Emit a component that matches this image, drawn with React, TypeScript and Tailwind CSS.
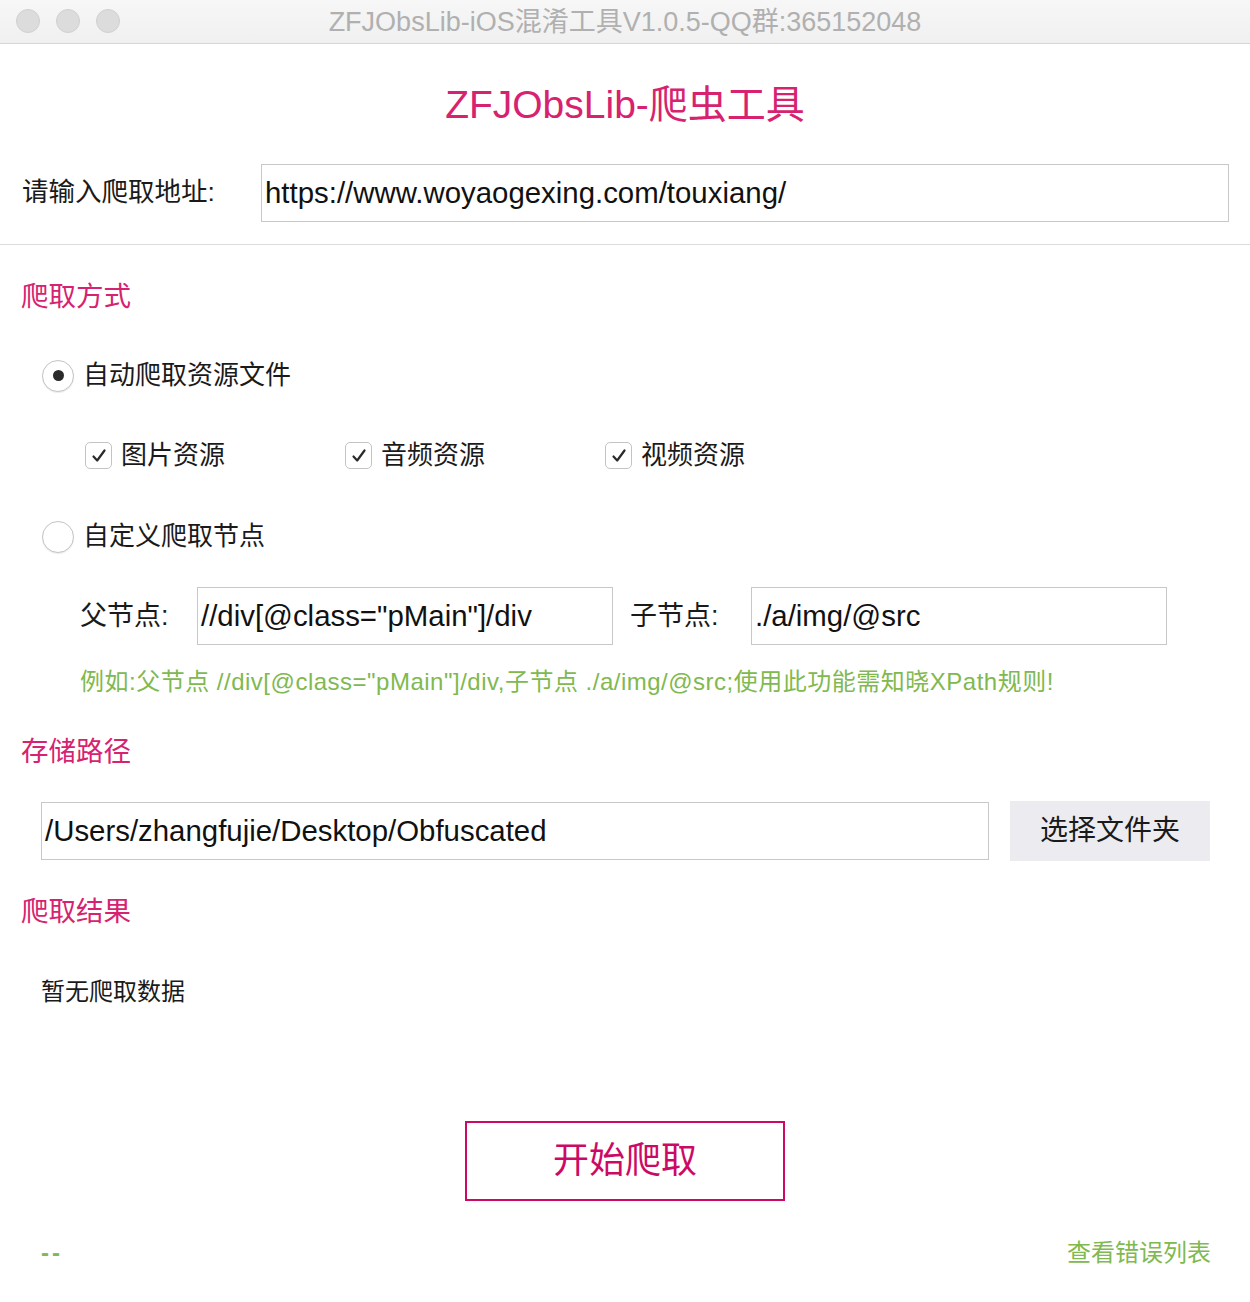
import React, { useState } from 'react';

const FONT = '"Liberation Sans", "Noto Sans CJK SC", sans-serif';

const Radio: React.FC<{ checked: boolean; onClick: () => void; label: string }> = ({ checked, onClick, label }) => (
  <div className="flex items-center gap-[9px] cursor-pointer" onClick={onClick}>
    <div className="w-[32px] h-[32px] rounded-full border border-[#c4c4c4] bg-white flex items-center justify-center shadow-[0_1px_1px_rgba(0,0,0,0.08)]">
      {checked && <div className="w-[11px] h-[11px] rounded-full bg-[#2a2a2a]" />}
    </div>
    <span className="text-[26px] text-[#1a1a1a]">{label}</span>
  </div>
);

const Check: React.FC<{ checked: boolean; onClick: () => void; label: string }> = ({ checked, onClick, label }) => (
  <div className="flex items-center gap-[9px] w-[260px] cursor-pointer" onClick={onClick}>
    <div className="w-[27px] h-[27px] rounded-[5px] border border-[#c4c4c4] bg-white flex items-center justify-center">
      {checked && (
        <svg width="18" height="18" viewBox="0 0 18 18">
          <path d="M3.5 9.5 L7.2 13.5 L14.5 3.5" fill="none" stroke="#2a2a2a" strokeWidth="2.2" strokeLinecap="round" strokeLinejoin="round" />
        </svg>
      )}
    </div>
    <span className="text-[26px] text-[#1a1a1a]">{label}</span>
  </div>
);

const App: React.FC = () => {
  const [mode, setMode] = useState<'auto' | 'custom'>('auto');
  const [checks, setChecks] = useState({ image: true, audio: true, video: true });

  return (
    <div className="w-[1250px] h-[1302px] bg-white flex flex-col overflow-hidden" style={{ fontFamily: FONT }}>
      {/* title bar */}
      <div className="h-[44px] shrink-0 flex items-center bg-gradient-to-b from-[#f7f7f7] to-[#f0f0f0] border-b border-[#d6d6d6] relative">
        <div className="flex gap-[16px] pl-[16px] absolute left-0 top-[9px]">
          <div className="w-[24px] h-[24px] rounded-full bg-[#dcdcdc] border border-[#d0d0d0]" />
          <div className="w-[24px] h-[24px] rounded-full bg-[#dcdcdc] border border-[#d0d0d0]" />
          <div className="w-[24px] h-[24px] rounded-full bg-[#dcdcdc] border border-[#d0d0d0]" />
        </div>
        <div className="flex-1 text-center text-[27px] text-[#b0b0b0] pt-[2px]">ZFJObsLib-iOS混淆工具V1.0.5-QQ群:365152048</div>
      </div>

      {/* header */}
      <div className="flex flex-col border-b border-[#dcdcdc]">
        <h1 className="text-center text-[39px] text-[#d6226f] mt-[37px] leading-[48px]">ZFJObsLib-爬虫工具</h1>
        <div className="flex items-center mt-[35px] mb-[22px] pl-[22px] pr-[21px]">
          <span className="w-[239px] text-[26.5px] text-[#1a1a1a]">请输入爬取地址:</span>
          <div className="flex-1 h-[58px] border border-[#c8c8c8] flex items-center pl-[3px] text-[29.4px] text-[#111]">
            https://www.woyaogexing.com/touxiang/
          </div>
        </div>
      </div>

      {/* body */}
      <div className="flex flex-col px-[21px]">
        <h2 className="text-[27.5px] text-[#d6226f] mt-[34px] leading-[36px]">爬取方式</h2>

        <div className="pl-[21px] mt-[41px]">
          <Radio checked={mode === 'auto'} onClick={() => setMode('auto')} label="自动爬取资源文件" />
        </div>

        <div className="flex pl-[64px] mt-[41px]">
          <Check checked={checks.image} onClick={() => setChecks({ ...checks, image: !checks.image })} label="图片资源" />
          <Check checked={checks.audio} onClick={() => setChecks({ ...checks, audio: !checks.audio })} label="音频资源" />
          <Check checked={checks.video} onClick={() => setChecks({ ...checks, video: !checks.video })} label="视频资源" />
        </div>

        <div className="pl-[21px] mt-[42px]">
          <Radio checked={mode === 'custom'} onClick={() => setMode('custom')} label="自定义爬取节点" />
        </div>

        <div className="flex items-center pl-[59px] mt-[31px]">
          <span className="w-[117px] text-[27px] text-[#1a1a1a]">父节点:</span>
          <div className="w-[416px] h-[58px] border border-[#c8c8c8] flex items-center pl-[3px] text-[29.4px] text-[#111]">
            //div[@class="pMain"]/div
          </div>
          <span className="w-[138px] pl-[17px] text-[27px] text-[#1a1a1a]">子节点:</span>
          <div className="w-[416px] h-[58px] border border-[#c8c8c8] flex items-center pl-[3px] text-[29.4px] text-[#111]">
            ./a/img/@src
          </div>
        </div>

        <p className="pl-[59px] mt-[21px] text-[24px] tracking-[0.5px] text-[#80b94f] leading-[32px]">
          例如:父节点 //div[@class="pMain"]/div,子节点 ./a/img/@src;使用此功能需知晓XPath规则!
        </p>

        <h2 className="text-[27.5px] text-[#d6226f] mt-[36px] leading-[36px]">存储路径</h2>

        <div className="flex items-center pl-[20px] pr-[19px] mt-[31px]">
          <div className="flex-1 h-[58px] border border-[#c8c8c8] flex items-center pl-[3px] text-[29.4px] text-[#111]">
            /Users/zhangfujie/Desktop/Obfuscated
          </div>
          <button className="ml-[21px] w-[200px] h-[60px] bg-[#ececf0] text-[28px] text-[#1a1a1a]">选择文件夹</button>
        </div>

        <h2 className="text-[27.5px] text-[#d6226f] mt-[33px] leading-[36px]">爬取结果</h2>

        <p className="pl-[20px] mt-[46px] text-[24px] text-[#1a1a1a] leading-[32px]">暂无爬取数据</p>

        <div className="flex justify-center mt-[113px]">
          <button className="w-[320px] h-[80px] border-2 border-[#cc0a66] text-[36px] text-[#cc0a66] bg-white">开始爬取</button>
        </div>

        <div className="flex justify-between items-center pl-[20px] pr-[18px] mt-[34px]">
          <span className="text-[24px] tracking-[3px] text-[#80b94f] font-bold">--</span>
          <span className="text-[24px] text-[#80b94f]">查看错误列表</span>
        </div>
      </div>
    </div>
  );
};

export default App;
